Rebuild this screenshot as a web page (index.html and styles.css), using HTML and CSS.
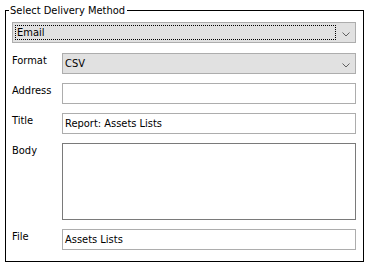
FILE: index.html
```html
<!DOCTYPE html>
<html>
<head>
<meta charset="utf-8">
<link rel="stylesheet" href="styles.css">
</head>
<body>
<fieldset class="group">
  <legend class="group-title">Select Delivery Method</legend>
  <div class="combo combo-wide">
    <span class="focus">Email</span>
    <svg class="chev" width="8" height="5" viewBox="0 0 8 5"><polyline points="0.5,0.5 4,4 7.5,0.5" fill="none" stroke="#606060" stroke-width="1"/></svg>
  </div>
  <div class="form">
    <label class="lbl">Format</label>
    <div class="combo">
      <span class="val">CSV</span>
      <svg class="chev" width="8" height="5" viewBox="0 0 8 5"><polyline points="0.5,0.5 4,4 7.5,0.5" fill="none" stroke="#606060" stroke-width="1"/></svg>
    </div>
    <label class="lbl">Address</label>
    <div class="box"></div>
    <label class="lbl">Title</label>
    <div class="box">Report: Assets Lists</div>
    <label class="lbl">Body</label>
    <div class="box area"></div>
    <label class="lbl">File</label>
    <div class="box">Assets Lists</div>
  </div>
</fieldset>
</body>
</html>
```
FILE: styles.css
```css
html, body {
  margin: 0;
  background: #fff;
}
body {
  font: 11px/13px "DejaVu Sans Condensed", "DejaVu Sans", sans-serif;
  color: #000;
}
.group {
  margin: 4px 0 0 5px;
  width: 359px;
  box-sizing: border-box;
  border: 1px solid #000;
  padding: 5px 7px 11px 6px;
  min-width: 0;
}
.group-title {
  margin-left: -3px;
  padding: 0 2px 0 1px;
  line-height: 13px;
}
.combo {
  display: flex;
  align-items: center;
  justify-content: space-between;
  box-sizing: border-box;
  height: 21px;
  background: #e1e1e1;
  border: 1px solid #adadad;
  padding: 0 5px 0 2px;
}
.combo-wide {
  width: 344px;
  padding: 2px 5px 2px 2px;
}
.focus {
  box-sizing: border-box;
  width: 321px;
  height: 15px;
  border: 1px dotted #000;
  padding-left: 1px;
  line-height: 13px;
}
.chev {
  display: block;
  margin-top: 3px;
}
.form {
  display: grid;
  grid-template-columns: 50px 294px;
  row-gap: 9px;
  margin-top: 10px;
}
.lbl {
  padding-top: 1px;
}
.box {
  box-sizing: border-box;
  height: 21px;
  border: 1px solid #adadad;
  background: #fff;
  padding-left: 2px;
  line-height: 19px;
}
.area {
  height: 77px;
  border-color: #7a7a7a;
}
```
